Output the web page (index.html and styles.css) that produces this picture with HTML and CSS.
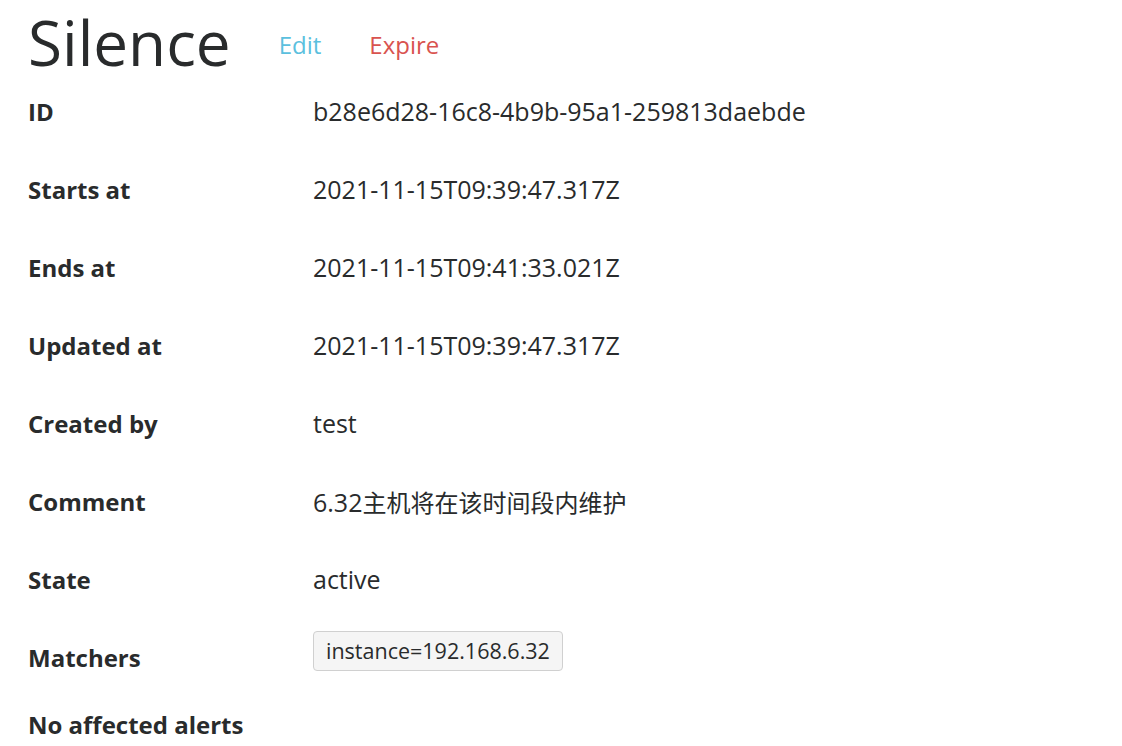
FILE: index.html
```html
<!DOCTYPE html>
<html lang="en">
<head>
<meta charset="utf-8">
<title>Silence</title>
<link rel="stylesheet" href="styles.css">
</head>
<body>
<div class="page">
  <div class="header">
    <h1 class="title">Silence</h1>
    <a class="btn btn-edit" href="#">Edit</a>
    <a class="btn btn-expire" href="#">Expire</a>
  </div>
  <div class="row"><div class="label">ID</div><div class="value">b28e6d28-16c8-4b9b-95a1-259813daebde</div></div>
  <div class="row"><div class="label">Starts at</div><div class="value">2021-11-15T09:39:47.317Z</div></div>
  <div class="row"><div class="label">Ends at</div><div class="value">2021-11-15T09:41:33.021Z</div></div>
  <div class="row"><div class="label">Updated at</div><div class="value">2021-11-15T09:39:47.317Z</div></div>
  <div class="row"><div class="label">Created by</div><div class="value">test</div></div>
  <div class="row"><div class="label">Comment</div><div class="value">6.32<span class="cjk">主机将在该时间段内维护</span></div></div>
  <div class="row"><div class="label">State</div><div class="value">active</div></div>
  <div class="row row-matchers"><div class="label">Matchers</div><div class="value"><span class="matcher">instance=192.168.6.32</span></div></div>
  <h5 class="affected">No affected alerts</h5>
</div>
</body>
</html>
```
FILE: styles.css
```css
html, body {
  margin: 0;
  padding: 0;
  background: #ffffff;
}
body {
  font-family: "Open Sans", "Noto Sans CJK SC", sans-serif;
  color: #292b2c;
  font-size: 25px;
}
.page {
  padding: 0 28px;
}
.header {
  display: flex;
  align-items: flex-start;
  height: 74px;
}
.title {
  margin: 0;
  font-weight: 400;
  font-size: 62px;
  line-height: 85px;
  color: #292b2c;
}
.btn {
  text-decoration: none;
  font-size: 24px;
  line-height: 36px;
  margin-top: 27px;
  margin-left: 48px;
}
.btn-edit {
  color: #5bc0de;
}
.btn-expire {
  color: #d9534f;
}
.row {
  display: flex;
  align-items: center;
  box-sizing: border-box;
  height: 78px;
  padding-bottom: 4px;
}
.label {
  width: 285px;
  font-size: 24px;
  font-weight: 700;
}
.value {
  flex: 1;
}
.cjk {
  font-size: 24px;
}
.row-matchers .value {
  margin-top: -12px;
}
.matcher {
  display: inline-block;
  padding: 3px 12px;
  border: 1px solid #d0d0d0;
  border-radius: 4px;
  background: #f5f5f5;
  font-size: 21.5px;
  line-height: 32px;
}
.affected {
  margin: 10px 0 0;
  font-size: 24px;
  line-height: 34px;
  font-weight: 700;
}
```
